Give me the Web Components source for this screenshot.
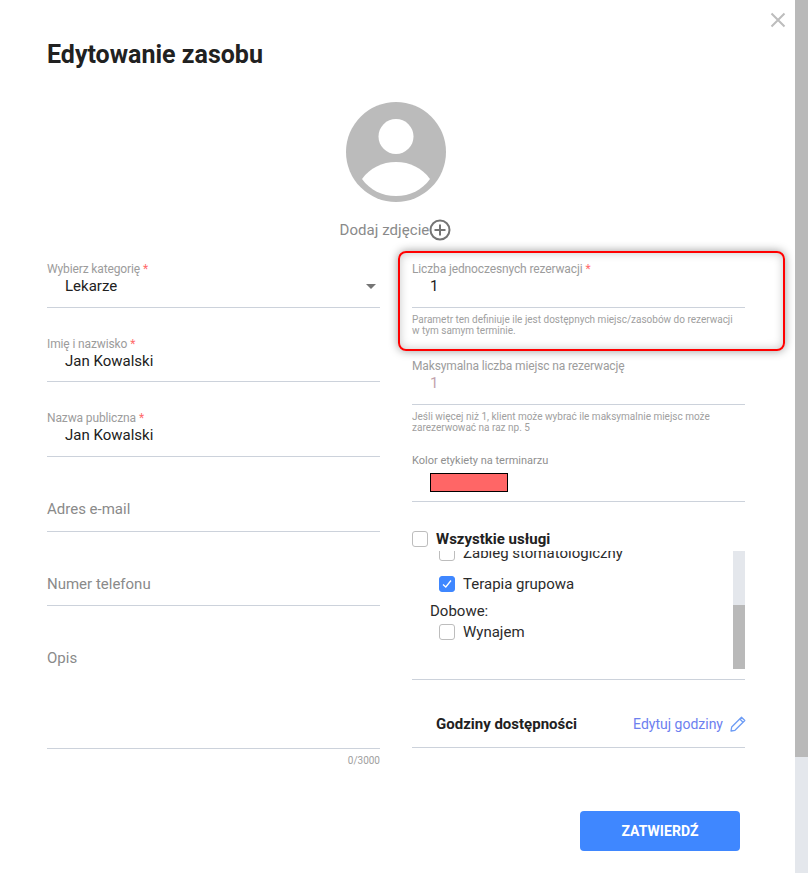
<!DOCTYPE html>
<html lang="pl">
<head>
<meta charset="utf-8">
<title>Edytowanie zasobu</title>
<style>
  html, body { margin: 0; height: 873px; overflow: hidden; background: #fff; }
  body { font-family: Roboto, "Liberation Sans", sans-serif; color: #212121; }
  .help-gap { margin-top: 23px; }
  .color-gap { margin-top: 21px; }
</style>
</head>
<body>
<edit-modal>
  <span slot="title">Edytowanie zasobu</span>

  <form-field slot="left" label="Wybierz kategorię" required select>Lekarze</form-field>
  <form-field slot="left" class="tight" label="Imię i nazwisko" required>Jan Kowalski</form-field>
  <form-field slot="left" label="Nazwa publiczna" required>Jan Kowalski</form-field>
  <form-field slot="left" class="loose" placeholder>Adres e-mail</form-field>
  <form-field slot="left" placeholder>Numer telefonu</form-field>
  <form-field slot="left" placeholder tall counter="0/3000">Opis</form-field>

  <highlight-box slot="right">
    <form-field label="Liczba jednoczesnych rezerwacji" required>1
      <span slot="help">Parametr ten definiuje ile jest dostępnych miejsc/zasobów do rezerwacji w tym samym terminie.</span>
    </form-field>
  </highlight-box>
  <form-field slot="right" class="help-gap" label="Maksymalna liczba miejsc na rezerwację" muted>1
    <span slot="help">Jeśli więcej niż 1, klient może wybrać ile maksymalnie miejsc może zarezerwować na raz np. 5</span>
  </form-field>
  <form-field slot="right" class="color-gap" label="Kolor etykiety na terminarzu" small><color-swatch></color-swatch></form-field>
  <service-list slot="right">
    <check-row slot="all" strong>Wszystkie usługi</check-row>
    <check-row>Zabieg stomatologiczny</check-row>
    <check-row class="next" checked>Terapia grupowa</check-row>
    <group-label>Dobowe:</group-label>
    <check-row>Wynajem</check-row>
  </service-list>
  <hours-row slot="right"></hours-row>
</edit-modal>

<script>
  class EditModal extends HTMLElement {
    constructor() {
      super();
      this.attachShadow({ mode: 'open' }).innerHTML = `
<style>
  :host { display: flex; width: 808px; height: 873px; position: relative; overflow: hidden; }
  .main { width: 795px; box-sizing: border-box; padding: 0 50px 0 47px; }
  h1 { margin: 41px 0 0; font-size: 25px; line-height: 28px; font-weight: 700; color: #212121; }
  .avatar { display: block; margin: 33px auto 0; }
  .photo { display: flex; justify-content: center; align-items: center; margin-top: 17px; height: 22px; padding-right: 1px;
    font-size: 15px; letter-spacing: .05px; color: #8a8a8a; }
  .columns { display: grid; grid-template-columns: 333px 333px; column-gap: 32px; margin-top: 21px; }
  .col { display: flex; flex-direction: column; min-width: 0; }
  .col.left ::slotted(form-field) { margin-bottom: 28px; }
  .col.left ::slotted(form-field.tight) { margin-bottom: 29px; margin-top: 1px; --pad: 10px; }
  .col.left ::slotted(form-field.loose) { --pad: 12px; }
  .col.left ::slotted(form-field[counter]) { margin-bottom: 0; }
  .foot { display: flex; justify-content: flex-end; padding-right: 5px; margin-top: 38px; }
  button { width: 160px; height: 40px; border: 0; border-radius: 4px; background: #3f87ff; color: #fff;
    font: 700 14px Roboto, sans-serif; letter-spacing: .05px; }
  .close { position: absolute; left: 770px; top: 12px; width: 16px; height: 16px; }
  .bar { width: 13px; height: 873px; background: #e4e7ec; }
  .bar div { height: 757px; background: #b9b9b9; }
</style>
<div class="main">
  <h1><slot name="title"></slot></h1>
  <svg class="avatar" width="100" height="100" viewBox="0 0 100 100">
    <circle cx="50" cy="50" r="50" fill="#bbb"/>
    <circle cx="50" cy="34.500" r="17.500" fill="#fff"/>
    <path d="M16 77C24 66 36 60 50 60C64 60 76 66 84 77C76 88 64 94 50 94C36 94 24 88 16 77Z" fill="#fff"/>
  </svg>
  <div class="photo">Dodaj zdjęcie
    <svg width="22" height="22" viewBox="0 0 22 22" fill="none" stroke="#757575" stroke-width="2">
      <circle cx="11" cy="11" r="9.500"/>
      <path d="M5.500 11H16.500M11 5.500V16.500"/>
    </svg>
  </div>
  <div class="columns">
    <div class="col left"><slot name="left"></slot></div>
    <div class="col right"><slot name="right"></slot></div>
  </div>
  <div class="foot"><button>ZATWIERDŹ</button></div>
</div>
<div class="bar"><div></div></div>
<svg class="close" viewBox="0 0 16 16" stroke="#bdbdbd" stroke-width="2" fill="none">
  <path d="M1.500 1.500L14.500 14.500M14.500 1.500L1.500 14.500"/>
</svg>`;
    }
  }

  class FormField extends HTMLElement {
    constructor() {
      super();
      this.attachShadow({ mode: 'open' }).innerHTML = `
<style>
  :host { display: block; }
  .box { border-bottom: 1px solid #ccd2db; padding-bottom: var(--pad, 11px); }
  .label { height: 14px; font-size: 12px; letter-spacing: -.13px; line-height: 14px; color: #9c9c9c; white-space: nowrap; }
  :host([small]) .label { font-size: 11px; letter-spacing: 0; color: #8f8f8f; margin-bottom: -1px; }
  .label i { margin-left: 3px; color: #ff6b6b; font-style: normal; }
  .value { display: flex; justify-content: space-between; align-items: center; min-height: 20px;
    padding-left: 18px; font-size: 15px; line-height: 20px; color: #212121; }
  :host([placeholder]) .value { padding-left: 0; color: #8a8a8a; }
  :host([tall]) .value { height: 89px; align-items: flex-start; }
  :host([muted]) .value { color: #c2a3ad; }
  :host([small]) .value { padding-left: 18px; }
  .arrow { width: 0; height: 0; margin-right: 4px; border: 5.500px solid transparent; border-top: 5px solid #757575; border-bottom: 0; }
  .help { max-width: 325px; font-size: 10px; line-height: 11px; color: #a0a0a0; padding-top: 6px; }
  .count { font-size: 10px; line-height: 24px; color: #a0a0a0; text-align: right; }
</style>
<div class="box">
  <div class="label"></div>
  <div class="value"><span><slot></slot></span></div>
</div>
<div class="help" hidden><slot name="help"></slot></div>
<div class="count" hidden></div>`;
    }
    connectedCallback() {
      const s = this.shadowRoot;
      const label = s.querySelector('.label');
      label.textContent = this.getAttribute('label') || '';
      if (this.hasAttribute('required')) {
        const star = document.createElement('i');
        star.textContent = '*';
        label.appendChild(star);
      }
      if (this.hasAttribute('select')) {
        const arrow = document.createElement('div');
        arrow.className = 'arrow';
        s.querySelector('.value').appendChild(arrow);
      }
      if (this.querySelector('[slot=help]')) s.querySelector('.help').hidden = false;
      const count = s.querySelector('.count');
      if (this.hasAttribute('counter')) {
        count.textContent = this.getAttribute('counter');
        count.hidden = false;
      }
    }
  }

  class HighlightBox extends HTMLElement {
    constructor() {
      super();
      this.attachShadow({ mode: 'open' }).innerHTML = `
<style>
  :host { display: block; position: relative; }
  .ring { position: absolute; left: -14px; top: -11px; width: 387px; height: 100px; box-sizing: border-box;
    border: 2px solid #f00; border-radius: 8px; pointer-events: none;
    box-shadow: 0 0 10px rgba(0,0,0,.4), inset 0 0 10px rgba(0,0,0,.22); }
</style>
<slot></slot>
<div class="ring"></div>`;
    }
  }

  class ColorSwatch extends HTMLElement {
    constructor() {
      super();
      this.attachShadow({ mode: 'open' }).innerHTML = `
<style>
  :host { display: block; width: 78px; height: 19px; box-sizing: border-box; margin-top: 6px; margin-bottom: -2px;
    border: 1px solid #000; background: #ff6666; }
</style>`;
    }
  }

  class ServiceList extends HTMLElement {
    constructor() {
      super();
      this.attachShadow({ mode: 'open' }).innerHTML = `
<style>
  :host { display: block; margin-top: 25px; border-bottom: 1px solid #ccd2db; padding-bottom: 10px; }
  .view { display: flex; height: 118px; }
  .list { flex: 1; overflow: hidden; padding-left: 18px; }
  .inner { margin-top: -10px; }
  .track { width: 12px; background: #e4e7ec; display: flex; flex-direction: column; justify-content: flex-end; }
  .thumb { height: 64px; background: #b9b9b9; }
</style>
<slot name="all"></slot>
<div class="view">
  <div class="list"><div class="inner"><slot></slot></div></div>
  <div class="track"><div class="thumb"></div></div>
</div>`;
    }
  }

  class CheckRow extends HTMLElement {
    constructor() {
      super();
      this.attachShadow({ mode: 'open' }).innerHTML = `
<style>
  :host { display: flex; align-items: center; gap: 8px; height: 24px; font-size: 15px; line-height: 24px; color: #2b2b2b; }
  :host(:not([slot=all])) { padding-left: 9px; }
  :host(.next) { margin-top: 7px; }
  :host([strong]) { font-weight: 700; color: #212121; }
  .box { flex: none; width: 16px; height: 16px; box-sizing: border-box; border: 1px solid #bdbdbd; border-radius: 3px; background: #fff; }
  :host([checked]) .box { background: #3f87ff; border-color: #3f87ff; display: grid; place-items: center; }
  svg { display: none; }
  :host([checked]) svg { display: block; }
</style>
<div class="box"><svg width="10" height="10" viewBox="0 0 10 10" fill="none" stroke="#fff" stroke-width="1.300"><path d="M1 5.500L3.800 8L9 1.500"/></svg></div>
<slot></slot>`;
    }
  }

  class GroupLabel extends HTMLElement {
    constructor() {
      super();
      this.attachShadow({ mode: 'open' }).innerHTML = `
<style>
  :host { display: block; margin-top: 6px; font-size: 15px; line-height: 18px; color: #2b2b2b; }
</style>
<slot></slot>`;
    }
  }

  class HoursRow extends HTMLElement {
    constructor() {
      super();
      this.attachShadow({ mode: 'open' }).innerHTML = `
<style>
  :host { display: flex; justify-content: space-between; align-items: center; height: 20px;
    padding: 34px 0 13px 24px; border-bottom: 1px solid #ccd2db; }
  b { font-size: 15px; font-weight: 700; color: #212121; }
  .edit { display: flex; align-items: center; gap: 7px; margin-right: -1px; font-size: 14px; color: #6d80ef; }
</style>
<b>Godziny dostępności</b>
<div class="edit">Edytuj godziny
  <svg width="16" height="16" viewBox="0 0 16 16" fill="none" stroke="#6d9cf5" stroke-width="1.300" stroke-linejoin="round">
    <path d="M11.500 1.200L14.800 4.500L5 14.300L1 15L1.700 11Z"/>
    <path d="M9.800 3L13 6.200"/>
  </svg>
</div>`;
    }
  }

  customElements.define('edit-modal', EditModal);
  customElements.define('form-field', FormField);
  customElements.define('highlight-box', HighlightBox);
  customElements.define('color-swatch', ColorSwatch);
  customElements.define('service-list', ServiceList);
  customElements.define('check-row', CheckRow);
  customElements.define('group-label', GroupLabel);
  customElements.define('hours-row', HoursRow);
</script>
</body>
</html>
